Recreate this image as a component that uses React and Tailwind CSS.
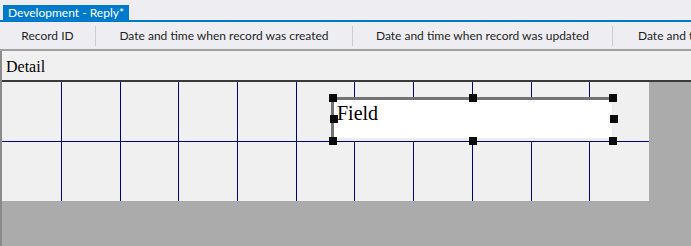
const columns = [
  { label: 'Record ID', width: 'w-[96px]' },
  { label: 'Date and time when record was created', width: 'w-[257px]' },
  { label: 'Date and time when record was updated', width: 'w-[260px]' },
  { label: 'Date and time when record was deleted', width: 'w-[260px]' },
];

const handles = [
  'left-[329px] top-[94px]',
  'left-[469px] top-[94px]',
  'left-[609px] top-[94px]',
  'left-[330px] top-[115px]',
  'left-[610px] top-[115px]',
  'left-[329px] top-[137px]',
  'left-[469px] top-[137px]',
  'left-[609px] top-[137px]',
];

export default function App() {
  return (
    <div className="w-[691px] h-[246px] overflow-hidden bg-[#eeeef2] font-['Lato','Open_Sans',sans-serif] relative">
      {/* document tab strip */}
      <div className="h-[22px] flex items-end pl-[3px] border-b-2 border-[#007acc]">
        <div className="h-[15px] bg-[#007acc] text-white text-[12px] leading-[15px] px-[5px] w-[126px] whitespace-nowrap">
          Development - Reply*
        </div>
      </div>

      {/* column header */}
      <div className="h-[29px] flex items-center whitespace-nowrap border-b-2 border-[#a0a0a0] text-[12px] text-[#1e1e1e]">
        {columns.map((c, i) => (
          <div
            key={c.label}
            className={`${c.width} shrink-0 h-[20px] flex items-center ${i === 3 ? 'pl-[25px]' : 'justify-center'} ${i < 3 ? 'border-r border-[#ccccd4]' : ''}`}
          >
            {c.label}
          </div>
        ))}
      </div>

      {/* designer surface */}
      <div className="flex h-[195px]">
        <div className="w-[2px] shrink-0 bg-[#8a8a8a]" />
        <div className="flex-1 bg-[#ababab]">
          <div className="h-[31px] bg-[#f0f0f0] border-b-2 border-[#3a3a3a] px-[4px] pt-[6px] font-[family-name:'Liberation_Serif',serif] text-[16px] text-black leading-[20px]">
            Detail
          </div>
          <div className="w-[647px] grid grid-cols-[60px_repeat(10,58.7px)] bg-[#f0f0f0]">
            {Array.from({ length: 22 }).map((_, i) => (
              <div
                key={i}
                className={`border-r border-[#00008b] ${i < 11 ? 'h-[60px] border-b' : 'h-[59px]'} ${i === 10 || i === 21 ? 'border-r-0' : ''}`}
              />
            ))}
          </div>
        </div>
      </div>

      {/* selected field */}
      <div className="absolute left-[331px] top-[97px] w-[284px] h-[44px] bg-white border-l-[3px] border-t-[3px] border-[#737373] shadow-[inset_-3px_-3px_0_#eeeeee]">
        <div className="pl-[3px] pt-[1px] font-[family-name:'Liberation_Serif',serif] text-[20px] leading-[24px] text-black">
          Field
        </div>
      </div>
      {handles.map((h) => (
        <div key={h} className={`absolute ${h} w-[8px] h-[8px] bg-[#0a0a0a]`} />
      ))}
    </div>
  );
}
